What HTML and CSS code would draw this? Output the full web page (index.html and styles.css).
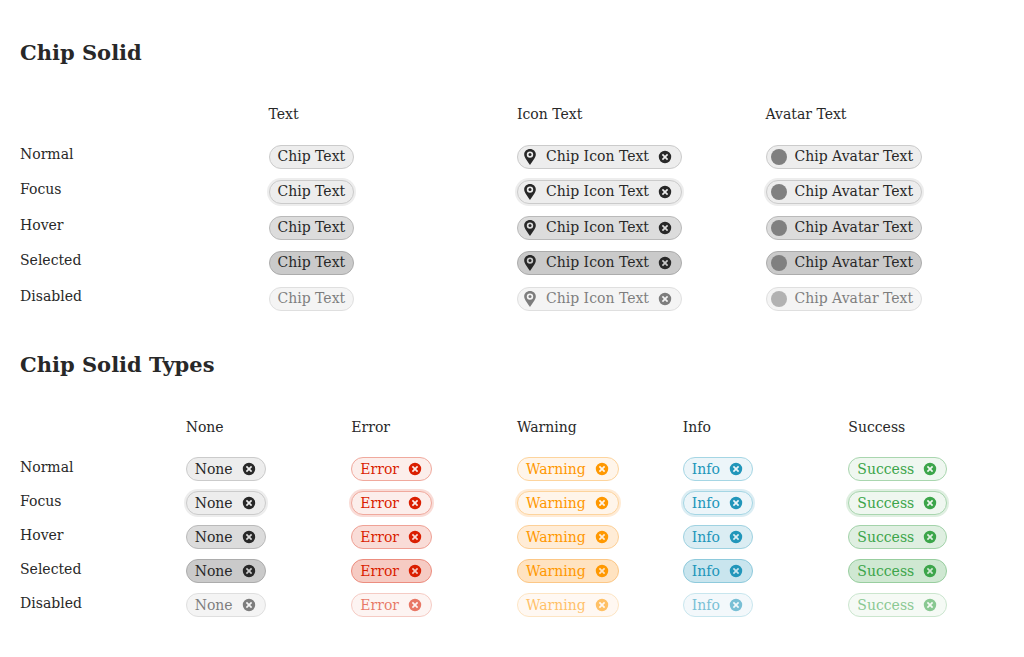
FILE: index.html
```
<!DOCTYPE html>
<html lang="en">
<head>
<meta charset="utf-8">
<title>Chip Solid</title>
<link rel="stylesheet" href="styles.css">
</head>
<body>
<svg class="sprite" aria-hidden="true">
  <symbol id="pin" viewBox="0 0 16 16"><path fill-rule="evenodd" d="M8 0C4.700 0 2.200 2.400 2.200 5.500C2.200 8.700 5.200 11.500 8 16C10.800 11.500 13.800 8.700 13.800 5.500C13.800 2.400 11.300 0 8 0ZM8 2.400A3.200 3.200 0 1 1 8 8.800A3.200 3.200 0 1 1 8 2.400Z"/><circle cx="8" cy="5.600" r="1.500"/></symbol>
  <symbol id="close" viewBox="0 0 16 16"><path fill-rule="evenodd" d="M8 1.800A6.200 6.200 0 1 0 8 14.200A6.200 6.200 0 1 0 8 1.800ZM6 4.800L8 6.800L10 4.800L11.200 6L9.200 8L11.200 10L10 11.200L8 9.200L6 11.200L4.800 10L6.800 8L4.800 6Z"/></symbol>
</svg>
<main class="page">
  <section class="section">
    <h2 class="title">Chip Solid</h2>
    <table class="samples samples-layout">
      <thead><tr><td></td><th scope="col">Text</th><th scope="col">Icon Text</th><th scope="col">Avatar Text</th></tr></thead>
      <tbody id="layout-rows"></tbody>
    </table>
  </section>
  <section class="section">
    <h2 class="title">Chip Solid Types</h2>
    <table class="samples samples-types">
      <thead><tr><td></td><th scope="col">None</th><th scope="col">Error</th><th scope="col">Warning</th><th scope="col">Info</th><th scope="col">Success</th></tr></thead>
      <tbody id="type-rows"></tbody>
    </table>
  </section>
</main>
<script src="chips.js"></script>
</body>
</html>
```
FILE: styles.css
```
* { box-sizing: border-box; }

body {
  margin: 0;
  background: #fff;
  color: #282828;
  font: 14px/20px "DejaVu Serif", serif;
}

.sprite { position: absolute; width: 0; height: 0; }

.page { padding: 37px 10px 36px 20px; }

.section + .section { margin-top: 27px; }

.title {
  margin: 0;
  font-size: 21px;
  line-height: 32px;
  font-weight: 700;
}

.samples { display: block; }
.samples thead { display: block; }
.samples tbody { display: grid; grid-auto-rows: 1fr; }
.samples tr { display: grid; }
.samples th { padding: 0; font-weight: 400; text-align: left; }
.samples td { display: flex; align-items: flex-start; padding: 0; }

.samples-layout { margin-top: 35px; }
.samples-layout thead { margin-bottom: 21px; }
.samples-layout tbody { height: 177px; }
.samples-layout tbody th { line-height: 18px; }
.samples-layout tr { grid-template-columns: repeat(4, 1fr); }
.samples-layout .chip-label { padding-bottom: 2px; }

.samples-types { margin-top: 36px; }
.samples-types thead { margin-bottom: 20px; }
.samples-types tbody { height: 170px; }
.samples-types tr { grid-template-columns: repeat(6, 1fr); }

.chip {
  display: inline-flex;
  align-items: center;
  gap: 8px;
  height: 24px;
  padding: 0 8px;
  border: 1px solid var(--line);
  border-radius: 12px;
  background: var(--fill);
  color: var(--ink);
  white-space: nowrap;
}
.chip-lead { padding-left: 4px; }

.icon { display: block; width: 16px; height: 16px; fill: currentColor; }
.avatar { width: 16px; height: 16px; border-radius: 50%; background: #808080; }

.close {
  width: 16px;
  height: 16px;
  padding: 0;
  border: 0;
  background: none;
  color: inherit;
}

.none { --ink: #282828; --fill: #ededed; --line: #cbcbcb; --ring: #ededed; }
.error { --ink: #da1e00; --fill: #fceeeb; --line: #f0a99d; --ring: #f9dcd7; }
.warning { --ink: #ff9800; --fill: #fff5ea; --line: #fdd49d; --ring: #ffebd5; }
.info { --ink: #2196ba; --fill: #ecf5f9; --line: #a5d6e4; --ring: #dbedf3; }
.success { --ink: #3ca54a; --fill: #eff7f0; --line: #a9d6af; --ring: #dfefe1; }

.focus { box-shadow: 0 0 0 2px var(--ring); }

.none.hover { --fill: #dcdcdc; --line: #bababa; }
.error.hover { --fill: #f9dcd7; --line: #efa195; }
.warning.hover { --fill: #ffecd6; --line: #fdd097; }
.info.hover { --fill: #dbedf3; --line: #9fd2e1; }
.success.hover { --fill: #dfefe1; --line: #a3d3aa; }

.none.selected { --fill: #cacaca; --line: #acacac; }
.error.selected { --fill: #f6cbc3; --line: #ec8d7f; }
.warning.selected { --fill: #ffe3c1; --line: #fcc786; }
.info.selected { --fill: #c9e5ee; --line: #8ecadc; }
.success.selected { --fill: #cfe8d2; --line: #98ce9f; }

.disabled { opacity: 0.6; }
```
FILE: chips.js
```
const states = ["Normal", "Focus", "Hover", "Selected", "Disabled"];
const pin = '<svg class="icon" aria-hidden="true"><use href="#pin"/></svg>';
const avatar = '<span class="avatar"></span>';

function chip(label, type, state, lead, closable) {
  const off = state === "Disabled" ? " disabled" : "";
  const close = closable
    ? `<button class="close" type="button" aria-label="Remove ${label}"${off}><svg class="icon" aria-hidden="true"><use href="#close"/></svg></button>`
    : "";
  return `<td><span class="chip ${type} ${state.toLowerCase()}${lead ? " chip-lead" : ""}">${lead}<span class="chip-label">${label}</span>${close}</span></td>`;
}

function row(state, cells) {
  return `<tr><th scope="row">${state}</th>${cells.join("")}</tr>`;
}

document.getElementById("layout-rows").innerHTML = states.map((s) => row(s, [
  chip("Chip Text", "none", s, "", false),
  chip("Chip Icon Text", "none", s, pin, true),
  chip("Chip Avatar Text", "none", s, avatar, false)
])).join("");

document.getElementById("type-rows").innerHTML = states.map((s) => row(s,
  ["None", "Error", "Warning", "Info", "Success"].map((t) => chip(t, t.toLowerCase(), s, "", true))
)).join("");
```
